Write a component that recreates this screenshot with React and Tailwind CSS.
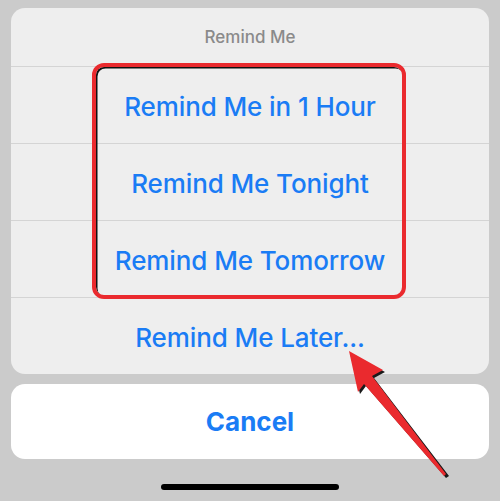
import React from "react";

const rows = ["Remind Me in 1 Hour", "Remind Me Tonight", "Remind Me Tomorrow"];

const Arrow = () => (
  <svg
    className="absolute left-0 top-0 pointer-events-none"
    width="500"
    height="501"
    viewBox="0 0 500 501"
  >
    <polygon
      points="350,353 385,372 374,378 449,476 446,478 366,386 360,394"
      fill="#1a1a1a"
    />
    <polygon
      points="349,351 383,370 372,376 446,474 444,476 364,384 358,392"
      fill="#ea2a2e"
    />
  </svg>
);

export default function App() {
  return (
    <div
      className="relative w-[500px] h-[501px] bg-[#cbcbcb] overflow-hidden"
      style={{ fontFamily: "Inter, 'Liberation Sans', sans-serif" }}
    >
      <div className="h-[8px]"></div>

      <div className="mx-[11px] rounded-[14px] bg-[#eeeeee] flex flex-col">
        <div className="h-[59px] flex items-center justify-center text-[17px] font-medium text-[#8a8a8a] border-b border-[#d4d4d4] pt-[1px]">
          Remind Me
        </div>
        <div className="relative">
          {rows.map((r) => (
            <div
              key={r}
              className="h-[77px] flex items-center justify-center text-[26px] font-medium text-[#1a7cf5] border-b border-[#d4d4d4] tracking-[-0.1px] pt-[2px]"
            >
              {r}
            </div>
          ))}
          <div className="absolute left-[81px] top-[-4px] w-[314px] h-[236px] rounded-[12px] border-[4px] border-[#ea2a2e] shadow-[inset_1.5px_1.5px_0_#111]"></div>
        </div>
        <div className="h-[76px] flex items-center justify-center text-[26px] font-medium text-[#1a7cf5] tracking-[-0.1px] pt-[2px]">
          Remind Me Later...
        </div>
      </div>

      <div className="mx-[11px] mt-[10px] h-[75px] rounded-[14px] bg-white flex items-center justify-center text-[26px] font-bold text-[#1a7cf5]">
        Cancel
      </div>

      <div className="mt-[25px] mx-auto w-[178px] h-[6px] rounded-full bg-black"></div>

      <Arrow />
    </div>
  );
}
